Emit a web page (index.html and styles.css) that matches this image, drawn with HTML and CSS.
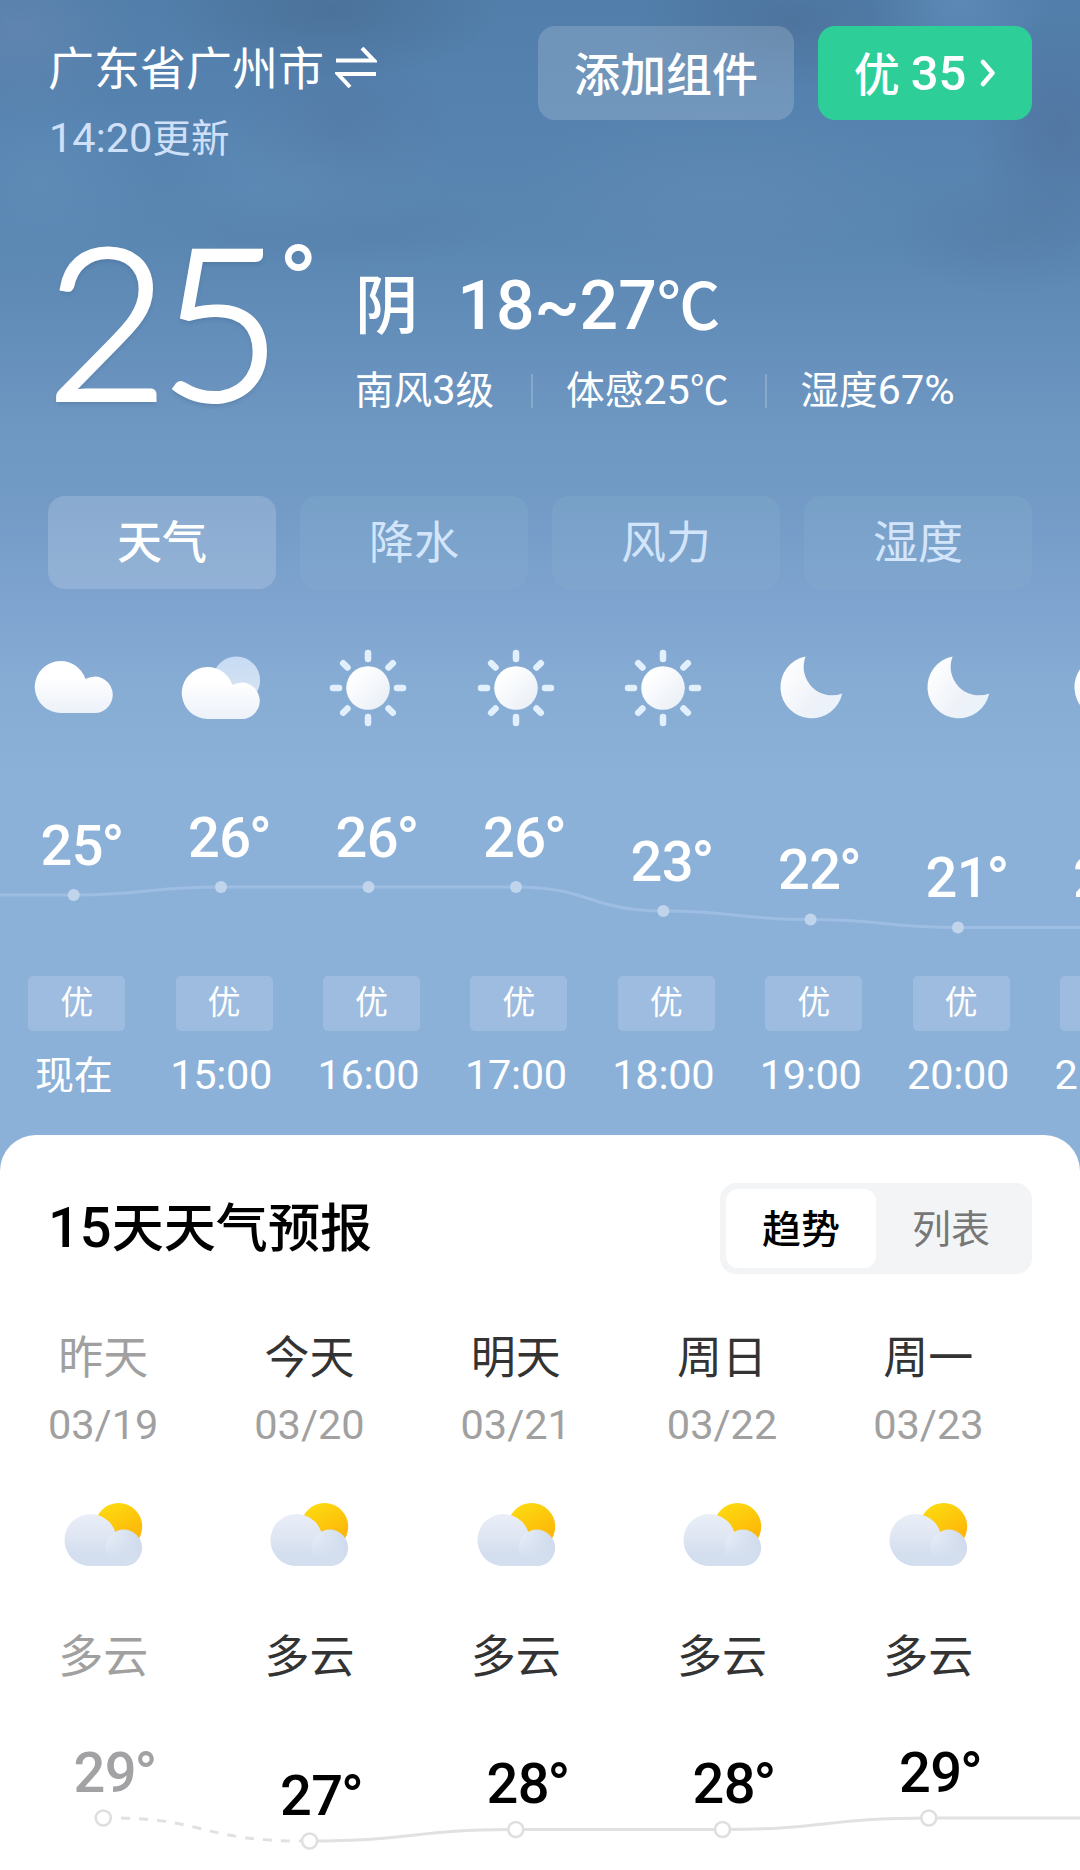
FILE: index.html
```html
<!DOCTYPE html>
<html lang="zh-CN">
<head>
    <meta charset="UTF-8">
    <meta name="viewport" content="width=device-width, initial-scale=1.0">
    <title>广州市天气</title>
    <link rel="stylesheet" href="styles.css">
</head>
<body>
    <!-- Weather icons -->
    <svg class="sprite" width="0" height="0">
        <defs>
            <linearGradient id="whiteFade" x1="0" y1="0" x2="0" y2="1">
                <stop offset="0.3" stop-color="#ffffff"/>
                <stop offset="1" stop-color="#ecf1f9"/>
            </linearGradient>
            <linearGradient id="discFade" x1="0" y1="0" x2="1" y2="1">
                <stop offset="0.2" stop-color="#ffffff"/>
                <stop offset="1" stop-color="#e6edf6"/>
            </linearGradient>
            <linearGradient id="backFade" x1="0" y1="0" x2="0" y2="1">
                <stop offset="0" stop-color="#c6dbf4"/>
                <stop offset="1" stop-color="#dbe5f1"/>
            </linearGradient>
            <linearGradient id="moonFade" x1="0" y1="0.2" x2="1" y2="0.9">
                <stop offset="0" stop-color="#ffffff"/>
                <stop offset="0.6" stop-color="#eef2f8"/>
                <stop offset="1" stop-color="#e8f2fc"/>
            </linearGradient>
            <linearGradient id="sunFade" x1="0.2" y1="0" x2="0.7" y2="1">
                <stop offset="0" stop-color="#fddc10"/>
                <stop offset="1" stop-color="#fdae08"/>
            </linearGradient>
            <linearGradient id="cloudFade" x1="0" y1="0" x2="0" y2="1">
                <stop offset="0" stop-color="#e9eef7"/>
                <stop offset="1" stop-color="#d2ddee"/>
            </linearGradient>
            <linearGradient id="puffFade" x1="0" y1="0.4" x2="1" y2="0.5">
                <stop offset="0" stop-color="#e6edf7"/>
                <stop offset="1" stop-color="#cdd9eb"/>
            </linearGradient>
            <linearGradient id="baseFade" gradientUnits="userSpaceOnUse" x1="0" y1="46" x2="0" y2="67">
                <stop offset="0" stop-color="#d3deee" stop-opacity="0"/>
                <stop offset="1" stop-color="#d3deee"/>
            </linearGradient>
        </defs>
        <symbol id="cloud" viewBox="0 0 84 84">
            <path fill="url(#whiteFade)" d="M29 67A26 26 0 1 1 53.5 33A18.2 18.2 0 1 1 62.5 67z"/>
        </symbol>
        <symbol id="cloudy" viewBox="0 0 84 84">
            <circle cx="57.4" cy="34.2" r="23.7" fill="url(#backFade)"/>
            <path fill="url(#whiteFade)" d="M29 73A26 26 0 1 1 53.5 39A18.2 18.2 0 1 1 62.5 73z"/>
        </symbol>
        <symbol id="sun" viewBox="0 0 84 84">
            <circle cx="42" cy="42" r="21.8" fill="url(#discFade)"/>
            <path stroke="#e2effd" stroke-width="6.5" stroke-linecap="round" d="M42 7v6M42 71v6M7 42h6M71 42h6M17.2 17.2l4.3 4.3M62.5 62.5l4.3 4.3M17.2 66.8l4.3-4.3M62.5 21.5l4.3-4.3"/>
        </symbol>
        <symbol id="moon" viewBox="0 0 84 84">
            <path fill="url(#moonFade)" d="M36.6 10.5A31.2 31.2 0 1 0 73.2 47.4A28.4 28.4 0 0 1 36.6 10.5z"/>
        </symbol>
        <symbol id="partly" viewBox="0 0 84 84">
            <circle cx="57.6" cy="34.6" r="23.6" fill="url(#sunFade)"/>
            <path fill="url(#cloudFade)" d="M29.5 74A26 26 0 1 1 55.5 48L63 74z"/>
            <circle cx="62.8" cy="55.8" r="18.2" fill="url(#puffFade)"/>
            <path fill="url(#baseFade)" d="M29.5 74A26 26 0 0 1 3.5 46H78.200A18.2 18.2 0 0 1 62.8 74z"/>
        </symbol>
    </svg>

    <div class="page">
        <header class="header">
            <div class="place">
                <div class="city">
                    <span>广东省广州市</span>
                    <svg class="swap" width="42" height="44" viewBox="0 0 42 44" fill="none" stroke="#fff" stroke-width="4">
                        <path d="M1 13.500H39L27 1M41 27H3L15 40"/>
                    </svg>
                </div>
                <div class="updated">14:20<span class="cn">更新</span></div>
            </div>
            <div class="actions">
                <button class="btn"><span class="label">添加组件</span></button>
                <button class="btn btn-air">
                    <span class="label">优</span><span class="aqi">35</span>
                    <svg width="16" height="30" viewBox="0 0 16 30" fill="none" stroke="#fff" stroke-width="4.500" stroke-linecap="round" stroke-linejoin="round">
                        <path d="M3 4L12.500 15L3 26"/>
                    </svg>
                </button>
            </div>
        </header>

        <section class="current">
            <div class="temp">25</div>
            <div class="degree">°</div>
            <div class="details">
                <div class="condition"><span class="cn">阴</span><span>18~27<span class="cn">℃</span></span></div>
                <div class="stats">
                    <span><span class="cn">南风</span>3<span class="cn">级</span></span>
                    <i class="divider"></i>
                    <span><span class="cn">体感</span>25<span class="cn">℃</span></span>
                    <i class="divider"></i>
                    <span><span class="cn">湿度</span>67%</span>
                </div>
            </div>
        </section>

        <nav class="tabs">
            <a class="tab active">天气</a>
            <a class="tab">降水</a>
            <a class="tab">风力</a>
            <a class="tab">湿度</a>
        </nav>

        <section class="hourly">
            <div class="hour-row icons">
                <svg><use href="#cloud"/></svg>
                <svg><use href="#cloudy"/></svg>
                <svg><use href="#sun"/></svg>
                <svg><use href="#sun"/></svg>
                <svg><use href="#sun"/></svg>
                <svg><use href="#moon"/></svg>
                <svg><use href="#moon"/></svg>
                <svg><use href="#moon"/></svg>
            </div>
            <svg class="hour-chart" width="1180" height="180" viewBox="0 0 1180 180">
                <path class="hour-line" d="M0 115H73.700C147 115 147 107 221 107H516C590 107 590 131 663.300 131C737 131 737 139.500 810.600 139.500C884 139.500 884 147.500 958 147.500H1180"/>
                <g class="hour-dots">
                    <circle cx="73.700" cy="115" r="6"/>
                    <circle cx="221" cy="107" r="6"/>
                    <circle cx="368.500" cy="107" r="6"/>
                    <circle cx="516" cy="107" r="6"/>
                    <circle cx="663.300" cy="131" r="6"/>
                    <circle cx="810.600" cy="139.500" r="6"/>
                    <circle cx="958" cy="147.500" r="6"/>
                    <circle cx="1105" cy="147.500" r="6"/>
                </g>
                <g class="hour-temps">
                    <text x="40.500" y="85">25<tspan class="deg" dx="-2" dy="3">°</tspan></text>
                    <text x="188" y="76.500">26<tspan class="deg" dx="-2" dy="3">°</tspan></text>
                    <text x="335.500" y="76.500">26<tspan class="deg" dx="-2" dy="3">°</tspan></text>
                    <text x="483" y="76.500">26<tspan class="deg" dx="-2" dy="3">°</tspan></text>
                    <text x="630.500" y="101">23<tspan class="deg" dx="-2" dy="3">°</tspan></text>
                    <text x="778" y="109">22<tspan class="deg" dx="-2" dy="3">°</tspan></text>
                    <text x="925.500" y="117">21<tspan class="deg" dx="-2" dy="3">°</tspan></text>
                    <text x="1073" y="117">21<tspan class="deg" dx="-2" dy="3">°</tspan></text>
                </g>
            </svg>
            <div class="hour-row air">
                <span>优</span><span>优</span><span>优</span><span>优</span><span>优</span><span>优</span><span>优</span><span>优</span>
            </div>
            <div class="hour-row times">
                <span class="now">现在</span><span>15:00</span><span>16:00</span><span>17:00</span><span>18:00</span><span>19:00</span><span>20:00</span><span>21:00</span>
            </div>
        </section>

        <section class="card">
            <div class="card-head">
                <h2>15<span class="cn">天天气预报</span></h2>
                <div class="switch">
                    <span class="on">趋势</span>
                    <span>列表</span>
                </div>
            </div>
            <div class="days">
                <div class="day past">
                    <div class="name">昨天</div>
                    <div class="date">03/19</div>
                    <svg><use href="#partly"/></svg>
                    <div class="desc">多云</div>
                </div>
                <div class="day">
                    <div class="name">今天</div>
                    <div class="date">03/20</div>
                    <svg><use href="#partly"/></svg>
                    <div class="desc">多云</div>
                </div>
                <div class="day">
                    <div class="name">明天</div>
                    <div class="date">03/21</div>
                    <svg><use href="#partly"/></svg>
                    <div class="desc">多云</div>
                </div>
                <div class="day">
                    <div class="name">周日</div>
                    <div class="date">03/22</div>
                    <svg><use href="#partly"/></svg>
                    <div class="desc">多云</div>
                </div>
                <div class="day">
                    <div class="name">周一</div>
                    <div class="date">03/23</div>
                    <svg><use href="#partly"/></svg>
                    <div class="desc">多云</div>
                </div>
            </div>
            <svg class="day-chart" width="1080" height="182" viewBox="0 0 1080 182">
                <path class="day-line dashed" d="M121 130C206 132 206 153 301 153"/>
                <path class="day-line" d="M309.600 153C413 153 413 141.500 515.800 141.500H722.500C826 141.500 826 130 928.800 130H1080"/>
                <g class="day-dots">
                    <circle cx="103.300" cy="130" r="7.500"/>
                    <circle cx="309.600" cy="153" r="7.500"/>
                    <circle cx="515.800" cy="141.500" r="7.500"/>
                    <circle cx="722.500" cy="141.500" r="7.500"/>
                    <circle cx="928.800" cy="130" r="7.500"/>
                </g>
                <g class="day-temps">
                    <text class="past" x="73.500" y="103.500">29<tspan class="deg" dx="-2" dy="3">°</tspan></text>
                    <text x="280" y="126.500">27<tspan class="deg" dx="-2" dy="3">°</tspan></text>
                    <text x="486.500" y="115">28<tspan class="deg" dx="-2" dy="3">°</tspan></text>
                    <text x="692.500" y="115">28<tspan class="deg" dx="-2" dy="3">°</tspan></text>
                    <text x="899" y="103.500">29<tspan class="deg" dx="-2" dy="3">°</tspan></text>
                </g>
            </svg>
        </section>
    </div>
</body>
</html>
```
FILE: styles.css
```css
* {
    box-sizing: border-box;
}

body {
    margin: 0;
    font-family: Roboto, "Noto Sans CJK SC", sans-serif;
    color: #fff;
    background: #fff;
}

.sprite {
    display: block;
    position: absolute;
}

.page {
    width: 1080px;
    height: 1870px;
    padding-top: 26px;
    overflow: hidden;
    display: flex;
    flex-direction: column;
    /* soft cloud patches over the sky gradient */
    background:
        radial-gradient(ellipse 170px 70px at 330px 10px, rgba(60, 85, 115, 0.3), transparent),
        radial-gradient(ellipse 110px 90px at 340px 130px, rgba(75, 100, 145, 0.25), transparent),
        radial-gradient(ellipse 150px 70px at 790px 20px, rgba(65, 90, 125, 0.3), transparent),
        radial-gradient(ellipse 90px 120px at 1060px 130px, rgba(70, 90, 130, 0.3), transparent),
        radial-gradient(ellipse 120px 60px at 1010px 235px, rgba(75, 100, 140, 0.2), transparent),
        radial-gradient(ellipse 120px 90px at 20px 30px, rgba(125, 145, 185, 0.3), transparent),
        radial-gradient(ellipse 120px 100px at 40px 180px, rgba(105, 155, 195, 0.3), transparent),
        radial-gradient(ellipse 140px 80px at 310px 170px, rgba(105, 155, 195, 0.3), transparent),
        radial-gradient(ellipse 90px 60px at 960px 5px, rgba(110, 155, 200, 0.35), transparent),
        radial-gradient(ellipse 200px 90px at 720px 190px, rgba(110, 150, 190, 0.25), transparent),
        radial-gradient(ellipse 180px 40px at 340px 228px, rgba(75, 105, 150, 0.15), transparent),
        linear-gradient(#517eaa 0, #5682af 120px, #5a86b2 240px, #6690bc 350px, #6e98c1 430px, #7099c4 480px, #7da2ce 590px, #86acd4 680px, #8cb1d8 780px, #8cb1d8 1200px);
}

/* CJK glyphs sit slightly smaller next to the digits */
.cn {
    font-size: 0.93em;
}

/* Header */
.header {
    display: flex;
    justify-content: space-between;
    align-items: flex-start;
    height: 137px;
    padding: 0 48px;
}

.place {
    padding-top: 13px;
}

.city {
    display: flex;
    align-items: center;
    gap: 11px;
    font-size: 46px;
    line-height: 60px;
}

.updated {
    margin-top: 14px;
    padding-left: 1px;
    font-size: 41.5px;
    line-height: 50px;
    color: #cfe0f8;
}

.actions {
    display: flex;
    gap: 24px;
}

.btn {
    display: flex;
    align-items: center;
    justify-content: center;
    width: 256px;
    height: 94px;
    padding: 0;
    border: none;
    border-radius: 17px;
    background: rgba(255, 255, 255, 0.17);
    color: #fff;
    font-family: inherit;
    font-size: 46px;
    font-weight: 500;
}

.label {
    padding-bottom: 4px;
}

.btn-air {
    width: 214px;
    background: #2dce98;
}

.aqi {
    margin: 0 14px 0 11px;
    font-size: 49px;
}

/* Current weather */
.current {
    display: flex;
    height: 178px;
    margin-top: 76px;
    padding-left: 46px;
}

.temp {
    width: 232px;
    font-family: Lato, sans-serif;
    font-size: 211px;
    font-weight: 300;
    letter-spacing: -9px;
    line-height: 160px;
    -webkit-text-stroke: 4px #fff;
    text-shadow: 0 3px 5px rgba(40, 70, 110, 0.3);
}

.degree {
    width: 77px;
    margin-top: -8px;
    font-size: 108px;
    line-height: 108px;
}

.details {
    padding-top: 27px;
}

.condition {
    display: flex;
    gap: 39px;
    font-size: 68px;
    font-weight: 500;
    line-height: 80px;
}

.stats {
    display: flex;
    align-items: center;
    margin-top: 18px;
    font-size: 41.5px;
    line-height: 50px;
    white-space: nowrap;
}

.divider {
    width: 2px;
    height: 34px;
    margin: 0 33px 0 37px;
    background: rgba(255, 255, 255, 0.2);
}

/* Tabs */
.tabs {
    display: flex;
    gap: 24px;
    margin-top: 79px;
    padding: 0 48px;
}

.tab {
    flex: 1;
    height: 93px;
    border-radius: 17px;
    background: rgba(140, 180, 210, 0.22);
    color: #d3e5fb;
    font-size: 45px;
    line-height: 96px;
    text-align: center;
}

.tab.active {
    background: rgba(255, 255, 255, 0.17);
    color: #fff;
    font-weight: 500;
}

/* Hourly forecast */
.hourly {
    height: 546px;
    padding-top: 57px;
    overflow: hidden;
}

.hour-row {
    display: grid;
    grid-template-columns: repeat(8, 147.4px);
    justify-items: center;
}

.icons svg,
.day svg {
    width: 84px;
    height: 84px;
}

.hour-chart {
    display: block;
    margin-top: 50px;
}

.hour-line {
    fill: none;
    stroke: #9dbde3;
    stroke-width: 3;
}

.hour-dots {
    fill: #c0d4ec;
}

.hour-temps,
.day-temps {
    fill: #fff;
    font-size: 56px;
    font-weight: 500;
    letter-spacing: -0.5px;
}

.deg {
    font-size: 61px;
}

.air {
    margin-top: 16px;
    padding-left: 3px;
}

.air span {
    width: 97px;
    height: 55px;
    border-radius: 5px;
    background: #9dbcdf;
    font-size: 33px;
    line-height: 53px;
    text-align: center;
}

.times {
    margin-top: 19px;
    font-size: 41.5px;
    line-height: 50px;
    letter-spacing: -0.3px;
}

.now {
    font-size: 39px;
    line-height: 52px;
}

/* 15 day card */
.card {
    flex: 1;
    padding-top: 48px;
    border-radius: 36px 36px 0 0;
    background: #fff;
    color: #333;
}

.hourly,
.card-head {
    flex-shrink: 0;
}

.card-head {
    display: flex;
    justify-content: space-between;
    align-items: center;
    padding: 0 48px;
}

.card-head h2 {
    margin: 0;
    color: #000;
    font-size: 56px;
    font-weight: 500;
    line-height: 80px;
}

.switch {
    display: flex;
    width: 312px;
    height: 91px;
    padding: 6px;
    border-radius: 16px;
    background: #f3f4f6;
    color: #777;
    font-size: 39px;
    line-height: 82px;
    text-align: center;
}

.switch span {
    flex: 1;
    height: 79px;
}

.switch .on {
    border-radius: 12px;
    background: #fff;
    color: #000;
    font-weight: 500;
}

.days {
    display: grid;
    grid-template-columns: repeat(5, 206.3px);
    margin-top: 55px;
}

.day {
    display: flex;
    flex-direction: column;
    align-items: center;
}

.name,
.desc {
    font-size: 45px;
    line-height: 60px;
}

.date {
    margin-top: 11px;
    color: #a0a0a0;
    font-size: 41.5px;
    line-height: 50px;
}

.day svg {
    margin: 42px 0 52px;
}

.past .name,
.past .desc {
    color: #a0a0a0;
}

.day-chart {
    display: block;
}

.day-line {
    fill: none;
    stroke: #e1e1e3;
    stroke-width: 3;
}

.day-line.dashed {
    stroke-dasharray: 9 9;
}

.day-dots {
    fill: #fff;
    stroke: #dfdfe1;
    stroke-width: 2.6;
}

.day-temps {
    fill: #000;
}

.day-temps .past {
    fill: #a2a2a5;
}
```
